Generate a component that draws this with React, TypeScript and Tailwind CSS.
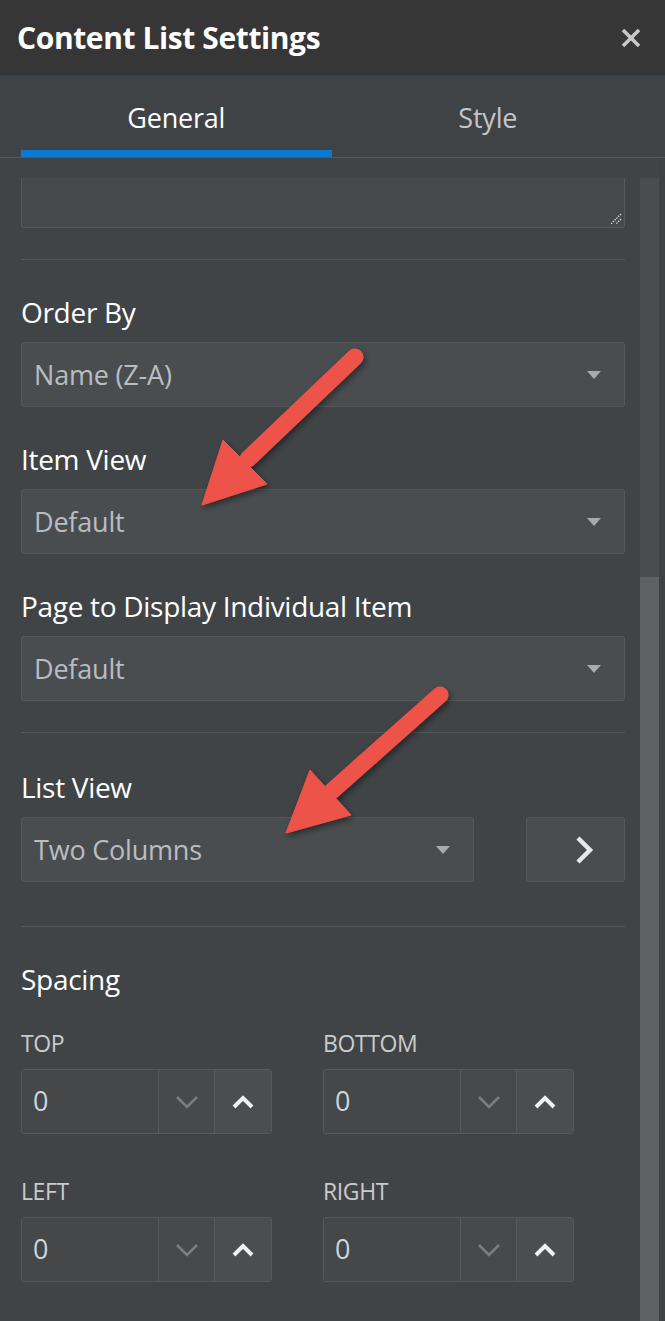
import React from "react";

function Triangle() {
  return (
    <svg width="16" height="10" viewBox="0 0 16 10">
      <polygon points="1,1 15,1 8,9" fill="#a7abaf" />
    </svg>
  );
}

function Select({ value, className = "" }: { value: string; className?: string }) {
  return (
    <div
      className={
        "flex h-[65px] items-center justify-between rounded-[3px] border border-[#56595c] bg-[#4a4d50] pl-[12px] pr-[22px] " +
        className
      }
    >
      <span className="pt-[2px] text-[27px] tracking-[-0.2px] text-[#b9bdc1]">{value}</span>
      <Triangle />
    </div>
  );
}

function Label({ children }: { children: React.ReactNode }) {
  return <div className="h-[30px] text-[28px] leading-[30px] tracking-[-0.3px] text-white">{children}</div>;
}

function Divider({ className = "" }: { className?: string }) {
  return <div className={"h-px bg-[#56595c] " + className} />;
}

function NumberInput() {
  return (
    <div className="flex h-[65px] w-[251px] overflow-hidden rounded-[3px] border border-[#56595c]">
      <div className="flex flex-1 items-center bg-[#454749] pl-[11px] text-[27px] text-[#cdd5dc]">0</div>
      <div className="flex w-[56px] items-center justify-center border-l border-[#56595c] bg-[#47494b]">
        <svg width="24" height="14" viewBox="0 0 24 14">
          <polyline points="2,2 12,12 22,2" fill="none" stroke="#7b7e81" strokeWidth="2.5" />
        </svg>
      </div>
      <div className="flex w-[57px] items-center justify-center border-l border-[#56595c] bg-[#4b4d50]">
        <svg width="24" height="16" viewBox="0 0 24 16">
          <polyline points="3,13 12,4 21,13" fill="none" stroke="#eef0f2" strokeWidth="4" />
        </svg>
      </div>
    </div>
  );
}

function SpacingField({ label }: { label: string }) {
  return (
    <div className="flex flex-col">
      <div className="mb-[13px] h-[26px] text-[23px] leading-[26px] tracking-[-0.4px] text-[#c9cbcd]">{label}</div>
      <NumberInput />
    </div>
  );
}

export default function App() {
  return (
    <div className="relative h-[1321px] w-[665px] overflow-hidden bg-[#414447] font-['Open_Sans',sans-serif]">
      {/* Header */}
      <div className="flex h-[75px] items-center justify-between bg-[#363636] pl-[17px] pr-[24px]">
        <span className="text-[30px] font-bold tracking-[-0.4px] text-white">Content List Settings</span>
        <svg width="20" height="20" viewBox="0 0 20 20">
          <line x1="2" y1="2" x2="18" y2="18" stroke="#c8c8c8" strokeWidth="3.5" />
          <line x1="18" y1="2" x2="2" y2="18" stroke="#c8c8c8" strokeWidth="3.5" />
        </svg>
      </div>

      {/* Tabs */}
      <div className="flex h-[83px] border-b border-[#55585b] bg-[#404346] px-[21px]">
        <div className="flex w-[312px] flex-col">
          <div className="flex flex-1 items-center justify-center pt-[12px] text-[27px] tracking-[-0.2px] text-white">General</div>
          <div className="h-[7px] bg-[#0a7ad2]" />
        </div>
        <div className="flex w-[314px] flex-col">
          <div className="flex flex-1 items-center justify-center pt-[12px] text-[27px] tracking-[-0.2px] text-[#c3c6c9]">Style</div>
          <div className="h-[7px]" />
        </div>
      </div>

      {/* Body */}
      <div className="flex">
        <div className="flex w-[640px] flex-col pl-[21px] pr-[15px] pt-[20px]">
          {/* textarea (scrolled) */}
          <div className="relative h-[50px] rounded-b-[3px] border-x border-b border-[#56595c] bg-[#46494c]">
            <svg className="absolute bottom-[2px] right-[2px]" width="12" height="12" viewBox="0 0 12 12">
              <line x1="11" y1="1" x2="1" y2="11" stroke="#cfcfcf" strokeWidth="1.3" strokeDasharray="1.5 1" />
              <line x1="11" y1="6" x2="6" y2="11" stroke="#cfcfcf" strokeWidth="1.3" strokeDasharray="1.5 1" />
            </svg>
          </div>

          <Divider className="mt-[31px]" />

          <div className="mt-[37px]">
            <div className="mb-[15px]"><Label>Order By</Label></div>
            <Select value="Name (Z-A)" />
          </div>

          <div className="mt-[37px]">
            <div className="mb-[15px]"><Label>Item View</Label></div>
            <Select value="Default" />
          </div>

          <div className="mt-[37px]">
            <div className="mb-[15px]"><Label>Page to Display Individual Item</Label></div>
            <Select value="Default" />
          </div>

          <Divider className="mt-[31px]" />

          <div className="mt-[39px]">
            <div className="mb-[15px]"><Label>List View</Label></div>
            <div className="flex gap-[52px]">
              <Select value="Two Columns" className="w-[453px]" />
              <div className="flex h-[65px] flex-1 items-center justify-center rounded-[3px] border border-[#56595c] bg-[#4a4d50] pl-[16px]">
                <svg width="20" height="28" viewBox="0 0 20 28">
                  <polyline points="4,2 16,14 4,26" fill="none" stroke="#e6e9ec" strokeWidth="4.5" />
                </svg>
              </div>
            </div>
          </div>

          <Divider className="mt-[44px]" />

          <div className="mt-[37px]">
            <Label>Spacing</Label>
          </div>

          <div className="mt-[36px] grid grid-cols-[251px_251px] gap-x-[51px] gap-y-[44px]">
            <SpacingField label="TOP" />
            <SpacingField label="BOTTOM" />
            <SpacingField label="LEFT" />
            <SpacingField label="RIGHT" />
          </div>
        </div>

        {/* Scrollbar */}
        <div className="mt-[20px] flex h-[1143px] w-[19px] flex-col bg-[#4a4c4f]">
          <div className="h-[399px]" />
          <div className="flex-1 bg-[#5f6163]" />
        </div>
        <div className="w-[6px] bg-[#3f4245]" />
      </div>

      {/* Annotation arrows */}
      <svg
        className="pointer-events-none absolute left-0 top-0"
        width="665"
        height="1321"
        viewBox="0 0 665 1321"
      >
        <defs>
          <filter id="sh" x="-20%" y="-20%" width="140%" height="140%">
            <feDropShadow dx="2" dy="3" stdDeviation="3" floodColor="#000" floodOpacity="0.45" />
          </filter>
        </defs>
        <g filter="url(#sh)" fill="#ee5249" stroke="#ee5249">
          <line x1="355" y1="357" x2="248" y2="459" strokeWidth="17" strokeLinecap="round" />
          <polygon points="202,505 223,440 267,484" strokeWidth="1" strokeLinejoin="miter" />
        </g>
        <g filter="url(#sh)" fill="#ee5249" stroke="#ee5249">
          <line x1="440" y1="695" x2="332" y2="791" strokeWidth="17" strokeLinecap="round" />
          <polygon points="286,833 310,770 351,815" strokeWidth="1" strokeLinejoin="miter" />
        </g>
      </svg>
    </div>
  );
}
